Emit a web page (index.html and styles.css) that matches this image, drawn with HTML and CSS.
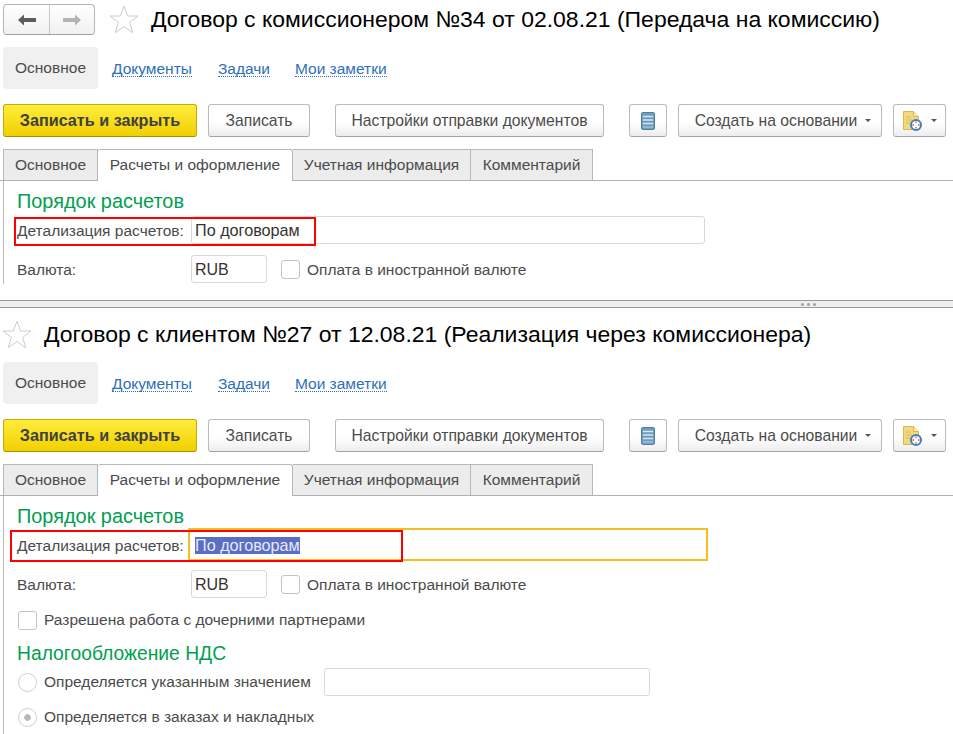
FILE: index.html
```html
<!DOCTYPE html>
<html lang="ru">
<head>
<meta charset="utf-8">
<title>Договоры</title>
<link rel="stylesheet" href="styles.css">
</head>
<body>
<svg class="defs" width="0" height="0" aria-hidden="true">
  <symbol id="star" viewBox="0 0 30 29"><path d="M15 1l3.600 10h10.400l-8.400 6.400 3.200 10.400-8.800-6.300-8.800 6.300 3.200-10.400-8.400-6.400h10.400z" fill="#fff" stroke="#c9ced3" stroke-width="1"/></symbol>
  <symbol id="list" viewBox="0 0 14 18"><rect x="0.500" y="0.500" width="13" height="17" rx="1.500" fill="#6f9dbd" stroke="#4f7f9f"/><path d="M2 4.500h10M2 8h10M2 11.500h10" stroke="#d5e4ee" stroke-width="1.300"/><path d="M2 15h10" stroke="#a9c6d9" stroke-width="1.300"/></symbol>
  <symbol id="doc" viewBox="0 0 20 20"><path d="M0.500 0.500h10l5 5v13h-15z" fill="#f3d97e" stroke="#dcb550"/><path d="M10.500 0.500v5h5" fill="#fbeeb8" stroke="#dcb550"/><path d="M3 6h5M3 9h6M3 12h4" stroke="#d9b65a"/><circle cx="13" cy="14" r="5" fill="#fff" stroke="#3f7fc0" stroke-width="2"/><path d="M13 10.500v1.500M13 16v1.500M9.500 14h1.500M15 14h1.500" stroke="#e04a4a" stroke-width="1.300"/></symbol>
</svg>

<section class="panel panel-top">
  <header class="head head-top">
    <div class="history">
      <span class="hist-btn hist-back"><svg width="18" height="12" viewBox="0 0 18 12"><path d="M0 6l6-5.500v3.500h12v4h-12v3.500z" fill="#5c5c5c"/></svg></span>
      <span class="hist-btn hist-next"><svg width="18" height="12" viewBox="0 0 18 12"><path d="M18 6l-6-5.500v3.500h-12v4h12v3.500z" fill="#b4b4b4"/></svg></span>
    </div>
    <svg class="star" width="30" height="29"><use href="#star"/></svg>
    <h1 class="title">Договор с комиссионером №34 от 02.08.21 (Передача на комиссию)</h1>
  </header>
  <nav class="sections">
    <span class="section current">Основное</span>
    <a class="section-link link-docs">Документы</a>
    <a class="section-link link-tasks">Задачи</a>
    <a class="section-link">Мои заметки</a>
  </nav>
  <div class="toolbar">
    <button class="btn btn-primary">Записать и закрыть</button>
    <button class="btn btn-save">Записать</button>
    <button class="btn btn-settings">Настройки отправки документов</button>
    <button class="btn btn-list"><svg width="14" height="18"><use href="#list"/></svg></button>
    <button class="btn btn-create">Создать на основании<i class="caret"></i></button>
    <button class="btn btn-doc"><svg width="20" height="20"><use href="#doc"/></svg><i class="caret"></i></button>
  </div>
  <div class="tabs">
    <span class="tab tab-main">Основное</span>
    <span class="tab tab-active">Расчеты и оформление</span>
    <span class="tab tab-acc">Учетная информация</span>
    <span class="tab tab-com">Комментарий</span>
  </div>
  <div class="content content-top">
    <h2 class="group">Порядок расчетов</h2>
    <div class="row row-detail">
      <span class="label">Детализация расчетов:</span>
      <span class="input input-wide">По договорам</span>
      <span class="mark mark-top"></span>
    </div>
    <div class="row row-currency">
      <span class="label">Валюта:</span>
      <span class="input input-cur">RUB</span>
      <i class="check check-cur"></i>
      <span class="text">Оплата в иностранной валюте</span>
    </div>
  </div>
</section>

<div class="splitter"><span class="dots"><i></i><i></i><i></i></span></div>

<section class="panel panel-bottom">
  <header class="head head-bottom">
    <svg class="star" width="30" height="29"><use href="#star"/></svg>
    <h1 class="title">Договор с клиентом №27 от 12.08.21 (Реализация через комиссионера)</h1>
  </header>
  <nav class="sections">
    <span class="section current">Основное</span>
    <a class="section-link link-docs">Документы</a>
    <a class="section-link link-tasks">Задачи</a>
    <a class="section-link">Мои заметки</a>
  </nav>
  <div class="toolbar">
    <button class="btn btn-primary">Записать и закрыть</button>
    <button class="btn btn-save">Записать</button>
    <button class="btn btn-settings">Настройки отправки документов</button>
    <button class="btn btn-list"><svg width="14" height="18"><use href="#list"/></svg></button>
    <button class="btn btn-create">Создать на основании<i class="caret"></i></button>
    <button class="btn btn-doc"><svg width="20" height="20"><use href="#doc"/></svg><i class="caret"></i></button>
  </div>
  <div class="tabs">
    <span class="tab tab-main">Основное</span>
    <span class="tab tab-active">Расчеты и оформление</span>
    <span class="tab tab-acc">Учетная информация</span>
    <span class="tab tab-com">Комментарий</span>
  </div>
  <div class="content">
    <h2 class="group">Порядок расчетов</h2>
    <div class="row row-detail">
      <span class="label">Детализация расчетов:</span>
      <span class="input input-wide input-focus"><span class="selected">По договорам</span></span>
      <span class="mark mark-bottom"></span>
    </div>
    <div class="row row-currency">
      <span class="label">Валюта:</span>
      <span class="input input-cur">RUB</span>
      <i class="check check-cur"></i>
      <span class="text">Оплата в иностранной валюте</span>
    </div>
    <div class="row row-option">
      <i class="check check-first"></i>
      <span class="text">Разрешена работа с дочерними партнерами</span>
    </div>
    <h2 class="group group-vat">Налогообложение НДС</h2>
    <div class="row row-radio">
      <i class="radio"></i>
      <span class="text text-radio">Определяется указанным значением</span>
      <span class="input input-vat"></span>
    </div>
    <div class="row row-radio2">
      <i class="radio radio-on"></i>
      <span class="text">Определяется в заказах и накладных</span>
    </div>
  </div>
</section>
```

FILE: styles.css
```css
* { box-sizing: border-box; }
html, body { margin: 0; padding: 0; }
body {
  width: 953px;
  height: 734px;
  overflow: hidden;
  background: #fff;
  font-family: "Liberation Sans", Arial, sans-serif;
  font-size: 15.500px;
  color: #4b4b4b;
}
.defs { position: absolute; }
.panel { overflow: hidden; }
.panel-top { height: 300px; }
.panel-bottom { height: 426px; }

.head { display: flex; align-items: flex-start; }
.head-top { height: 47px; padding: 4px 0 0 3px; }
.head-bottom { height: 54px; padding: 12px 0 0 2px; }
.history {
  display: flex;
  width: 92px;
  height: 31px;
  border: 1px solid #b5b5b5;
  border-bottom-color: #a0a0a0;
  border-radius: 4px;
  background: linear-gradient(#fff, #f1f1f1);
}
.hist-btn { flex: 1; display: flex; align-items: center; justify-content: center; }
.hist-back { border-right: 1px solid #c8c8c8; flex: 0 0 46px; }
.star { flex: none; display: block; }
.head-top .star { margin: 1px 0 0 14px; }
.title {
  margin: 0;
  font-weight: 400;
  font-size: 22.970px;
  line-height: 30px;
  color: #000;
  white-space: nowrap;
}
.head-top .title { margin: 0 0 0 12px; }
.head-bottom .title { margin: -1px 0 0 12px; }

.sections { display: flex; align-items: center; height: 42px; padding-left: 3px; }
.section {
  width: 95px;
  height: 42px;
  line-height: 42px;
  text-align: center;
  background: #f0f0f0;
  border-radius: 4px;
  color: #4b4b4b;
}
.section-link {
  color: #2f6fb7;
  border-bottom: 1px dotted #2f6fb7;
  line-height: 15px;
  margin-top: 2px;
}
.link-docs { margin-left: 14px; margin-right: 26px; }
.link-tasks { margin-right: 25px; }

.toolbar { display: flex; height: 33px; margin-top: 15px; padding-left: 3px; }
.btn {
  display: flex;
  align-items: center;
  justify-content: center;
  height: 33px;
  padding: 0;
  border: 1px solid #bbb;
  border-bottom-color: #a5a5a5;
  border-radius: 3px;
  background: linear-gradient(#fff 55%, #ededed);
  font: inherit;
  font-size: 15.700px;
  color: #4b4b4b;
}
.btn-primary {
  width: 194px;
  border-color: #c9aa00;
  border-bottom-color: #a98f00;
  background: linear-gradient(#ffec3d, #f0d000);
  font-weight: 700;
  font-size: 16.200px;
  color: #404040;
}
.btn-save { width: 102px; margin-left: 11px; }
.btn-settings { width: 269px; margin-left: 25px; }
.btn-list { width: 38px; margin-left: 25px; }
.btn-create { width: 204px; margin-left: 11px; padding-left: 6px; }
.btn-doc { width: 53px; margin-left: 11px; padding-left: 1px; }
.caret {
  display: block;
  width: 0;
  height: 0;
  margin-left: 8px;
  border: 3px solid transparent;
  border-top: 3px solid #555;
  border-bottom: 0;
}

.tabs {
  display: flex;
  align-items: flex-end;
  height: 32px;
  margin: 12px 0 0 0;
  padding-left: 3px;
  border-bottom: 1px solid #b0b0b0;
}
.tab {
  height: 31px;
  line-height: 29px;
  text-align: center;
  background: #ececec;
  border: 1px solid #b8b8b8;
  border-left: 0;
  border-bottom: 0;
  color: #4b4b4b;
  white-space: nowrap;
}
.tab-main { width: 95px; border-left: 1px solid #b8b8b8; }
.tab-active {
  width: 195px;
  height: 32px;
  margin-bottom: -1px;
  background: #fff;
  border-radius: 3px 3px 0 0;
  line-height: 30px;
}
.tab-acc { width: 178px; }
.tab-com { width: 122px; }

.content {
  margin-left: 3px;
  padding-left: 13px;
  border-left: 1px solid #b8b8b8;
  height: 245px;
}
.content-top { height: 103px; }
.group {
  margin: 0;
  height: 35px;
  padding-top: 9px;
  font-weight: 400;
  font-size: 19.900px;
  line-height: 22px;
  color: #00a050;
  white-space: nowrap;
}
.row { position: relative; display: flex; align-items: center; }
.row-detail { height: 28px; }
.row-currency { height: 28px; margin-top: 11px; }
.row-option { height: 20px; margin-top: 12px; }
.group-vat { margin-top: 4px; height: 34px; font-size: 19.300px; }
.row-radio { height: 28px; }
.row-radio2 { height: 20px; margin-top: 11px; }
.label { width: 174px; flex: none; white-space: nowrap; }
.row-detail .label, .row-currency .label, .row-currency .text { margin-top: 2px; }
.input {
  display: block;
  height: 28px;
  padding-left: 3px;
  line-height: 26px;
  border: 1px solid #d9d9d9;
  border-radius: 3px;
  background: #fff;
  color: #333;
  font-size: 16.200px;
}
.input-wide { width: 514px; }
.input-cur { width: 76px; font-size: 16px; line-height: 28px; }
.input-focus {
  align-self: flex-start;
  width: 520px;
  height: 33px;
  margin: -3px 0 0 -3px;
  padding-left: 5px;
  line-height: 31px;
  border: 2px solid #f6bd20;
  border-radius: 0;
}
.selected { background: #5a6ec4; color: #e7e9f6; display: inline-block; line-height: 17px; }
.check {
  display: block;
  flex: none;
  width: 19px;
  height: 19px;
  border: 1px solid #c4c4c4;
  border-radius: 3px;
  background: #fff;
}
.check-cur { margin-left: 14px; }
.check-first { margin-left: 1px; }
.text { margin-left: 7px; white-space: nowrap; }
.radio {
  display: block;
  flex: none;
  width: 19px;
  height: 19px;
  margin-left: 1px;
  border: 1px solid #d0d0d0;
  border-radius: 50%;
  background: #fff;
}
.radio-on { background: radial-gradient(circle, #b8b8b8 0 3px, #fff 3.500px); }
.input-vat { width: 326px; margin-left: 13px; }
.mark { position: absolute; display: block; border: 2px solid #f00; pointer-events: none; }
.mark-top { left: -3px; top: 1px; width: 302px; height: 29px; }
.mark-bottom { left: -7px; top: -1px; width: 393px; height: 32px; }

.splitter {
  position: relative;
  height: 8px;
  background: #eee;
  border-top: 1px solid #999;
  border-bottom: 1px solid #999;
}
.dots { position: absolute; left: 801px; top: 2px; display: flex; gap: 3px; }
.dots i { display: block; width: 3px; height: 3px; border-radius: 50%; background: #a0a0a0; }
```
